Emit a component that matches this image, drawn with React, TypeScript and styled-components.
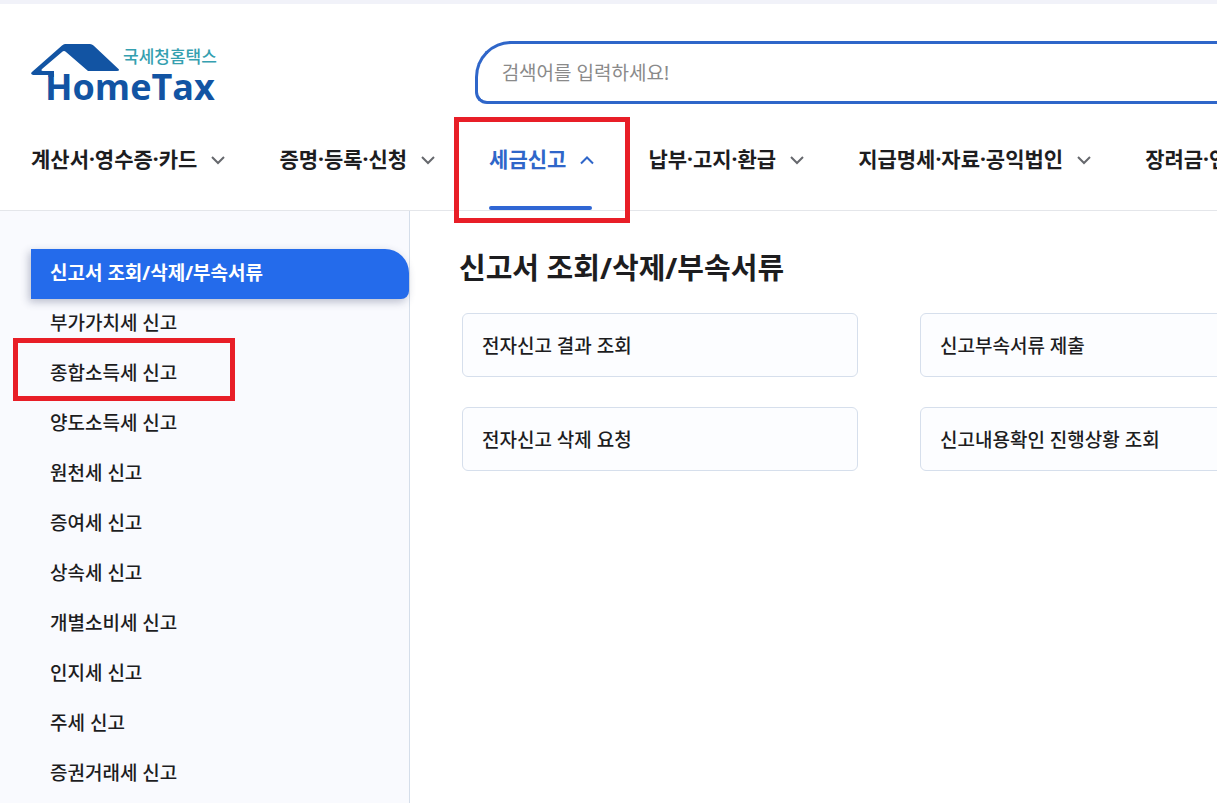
import React from "react";
import styled, { createGlobalStyle, css } from "styled-components";

const GlobalStyle = createGlobalStyle`
  *, *::before, *::after { box-sizing: border-box; }
  body {
    margin: 0;
    background: #ffffff;
    color: #1d1d1f;
    font-family: "Noto Sans", "Noto Sans CJK KR", sans-serif;
    font-weight: 500;
  }
  ul { list-style: none; margin: 0; padding: 0; }
  a { color: inherit; text-decoration: none; }
`;

const Page = styled.div`
  display: flex;
  flex-direction: column;
  min-height: 100vh;
  overflow: hidden;
  border-top: 4px solid #f1f2f9;
`;

const Header = styled.header`
  border-bottom: 1px solid #e4e6ea;
`;

const TopRow = styled.div`
  display: flex;
  justify-content: space-between;
  padding-top: 37px;
`;

const LogoLink = styled.a`
  display: block;
  height: 63px;
  margin-left: 31px;
`;

const SearchForm = styled.form`
  flex: 0 0 61%;
  display: flex;
  height: 63px;
  border: 3px solid #2f66c9;
  border-right: 0;
  border-radius: 36px 0 0 12px;
`;

const SearchInput = styled.input`
  flex: 1;
  min-width: 0;
  padding: 0 24px;
  border: 0;
  outline: 0;
  background: transparent;
  font: inherit;
  font-size: 19px;
  font-weight: 400;
  color: #1d1d1f;

  &::placeholder { color: #8a8a8a; opacity: 1; }
`;

const NavList = styled.ul`
  display: flex;
  gap: 53px;
  height: 106px;
  padding: 0 31px;
`;

const NavItem = styled.li`
  position: relative;
  flex: none;
`;

const NavButton = styled.button<{ $active?: boolean }>`
  display: flex;
  align-items: center;
  gap: 13px;
  height: 106px;
  padding: 4px 0 0;
  border: 0;
  background: none;
  font: inherit;
  font-size: 21px;
  font-weight: 700;
  line-height: 30px;
  white-space: nowrap;
  color: ${(p) => (p.$active ? "#2f66c9" : "#1d1d1f")};

  svg {
    margin-top: 2px;
    color: ${(p) => (p.$active ? "#2f66c9" : "#66686d")};
  }

  ${(p) =>
    p.$active &&
    css`
      &::after {
        content: "";
        position: absolute;
        left: 0;
        right: 3px;
        bottom: 0;
        height: 4px;
        border-radius: 2px;
        background: #2f66d4;
      }
    `}
`;

const Highlight = styled.span<{ $inset: string }>`
  position: absolute;
  inset: ${(p) => p.$inset};
  border: 5px solid #e81e27;
  pointer-events: none;
`;

const Body = styled.div`
  flex: 1;
  display: flex;
`;

const Sidebar = styled.nav`
  flex: 0 0 410px;
  padding: 38px 0 0 31px;
  border-right: 1px solid #d5deea;
  background: #f9fafe;
`;

const SideItem = styled.li`
  position: relative;
`;

const SideLink = styled.a<{ $active?: boolean }>`
  display: flex;
  align-items: center;
  height: 50px;
  padding: 0 19px 2px;
  font-size: 19px;
  line-height: 28px;

  ${(p) =>
    p.$active &&
    css`
      border-radius: 0 24px 8px 0;
      background: #246beb;
      box-shadow: -2px 3px 8px rgba(40, 50, 90, 0.3);
      color: #ffffff;
      font-weight: 700;
    `}
`;

const Content = styled.main`
  flex: 1;
  min-width: 0;
  padding: 36px 0 0 49px;
`;

const Title = styled.h1`
  margin: 0 0 24px;
  font-size: 29px;
  line-height: 42px;
  font-weight: 700;
`;

const CardGrid = styled.ul`
  display: grid;
  grid-template-columns: repeat(2, 396px);
  gap: 30px 62px;
  padding-left: 3px;
`;

const CardLink = styled.a`
  display: flex;
  align-items: center;
  height: 64px;
  padding: 1px 19px 0;
  border: 1px solid #d6dfec;
  border-radius: 6px;
  background: #fcfdff;
  font-size: 19px;
  line-height: 28px;
`;

const LogoText = styled.text`
  font-family: "Open Sans", sans-serif;
  font-size: 36px;
  font-weight: 700;
  fill: #1254a3;
`;

const LogoCaption = styled.text`
  font-family: "Noto Sans CJK KR", sans-serif;
  font-size: 17px;
  font-weight: 500;
  fill: #35a0b0;
`;

const Logo = () => (
  <svg width="190" height="72" viewBox="0 0 190 72" role="img" aria-label="국세청홈택스 HomeTax">
    <path
      d="M31 4.500 Q32.500 3 34 3 H59 Q61 3 62.500 4.500 L87.500 28 Q89 30 86 30 H57 L35 11 Q33 9 31 11 L11 28 Q9.500 30 12 30 H23 V36 H17.500 V34 H2 Q-1.500 33 1.500 30.500 Z"
      fill="#1254a3"
    />
    <LogoCaption x="92" y="22">국세청홈택스</LogoCaption>
    <LogoText x="14" y="59">HomeTax</LogoText>
  </svg>
);

const Chevron = ({ up }: { up?: boolean }) => (
  <svg width="16" height="10" viewBox="0 0 16 10" fill="none" stroke="currentColor" strokeWidth="2" aria-hidden="true">
    <path d={up ? "M2 8.500 L8 2.500 L14 8.500" : "M2 2 L8 8 L14 2"} />
  </svg>
);

const menus = [
  "계산서·영수증·카드",
  "증명·등록·신청",
  "세금신고",
  "납부·고지·환급",
  "지급명세·자료·공익법인",
  "장려금·연말정산·기부금",
];

const sections = [
  "신고서 조회/삭제/부속서류",
  "부가가치세 신고",
  "종합소득세 신고",
  "양도소득세 신고",
  "원천세 신고",
  "증여세 신고",
  "상속세 신고",
  "개별소비세 신고",
  "인지세 신고",
  "주세 신고",
  "증권거래세 신고",
];

const cards = ["전자신고 결과 조회", "신고부속서류 제출", "전자신고 삭제 요청", "신고내용확인 진행상황 조회"];

export default function App() {
  return (
    <Page>
      <GlobalStyle />
      <Header>
        <TopRow>
          <LogoLink href="#">
            <Logo />
          </LogoLink>
          <SearchForm role="search">
            <SearchInput type="text" aria-label="검색어" placeholder="검색어를 입력하세요!" />
          </SearchForm>
        </TopRow>
        <nav>
          <NavList>
            {menus.map((label) => {
              const active = label === "세금신고";
              return (
                <NavItem key={label}>
                  <NavButton type="button" $active={active} aria-expanded={active}>
                    {label}
                    <Chevron up={active} />
                  </NavButton>
                  {active && <Highlight $inset="13px -35px -13px -35px" />}
                </NavItem>
              );
            })}
          </NavList>
        </nav>
      </Header>
      <Body>
        <Sidebar>
          <ul>
            {sections.map((label, i) => (
              <SideItem key={label}>
                <SideLink href="#" $active={i === 0}>
                  {label}
                </SideLink>
                {label === "종합소득세 신고" && <Highlight $inset="-11px 174px -2px -18px" />}
              </SideItem>
            ))}
          </ul>
        </Sidebar>
        <Content>
          <Title>신고서 조회/삭제/부속서류</Title>
          <CardGrid>
            {cards.map((label) => (
              <li key={label}>
                <CardLink href="#">{label}</CardLink>
              </li>
            ))}
          </CardGrid>
        </Content>
      </Body>
    </Page>
  );
}
